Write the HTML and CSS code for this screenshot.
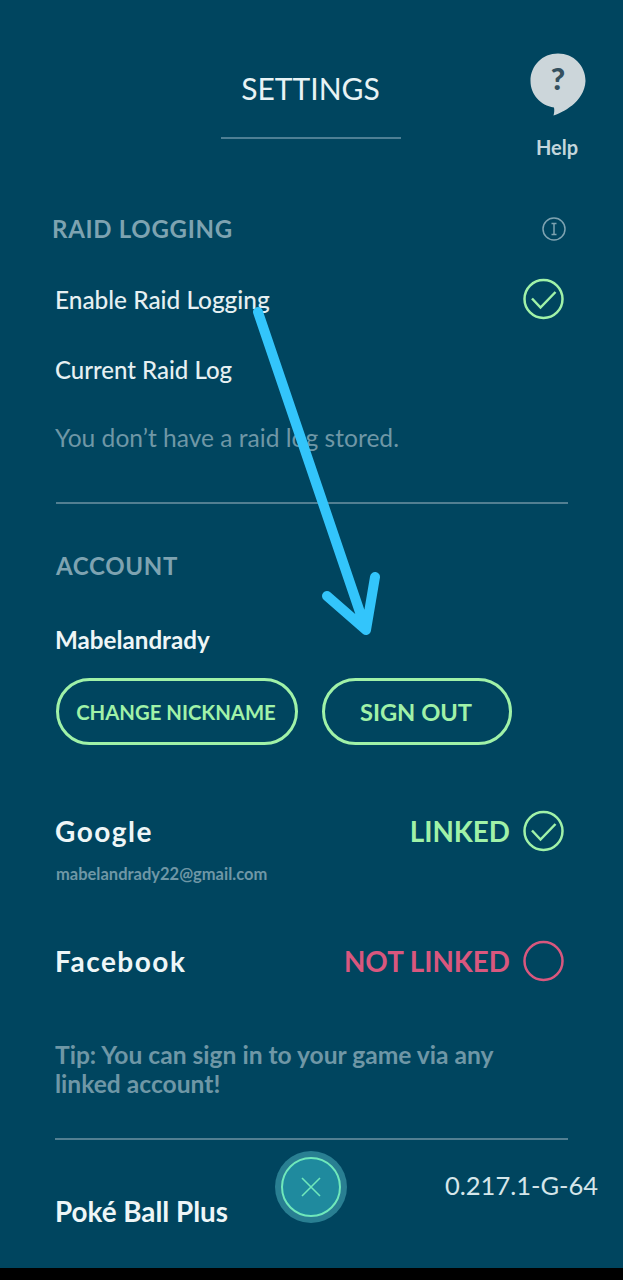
FILE: index.html
```html
<!DOCTYPE html>
<html lang="en">
<head>
    <meta charset="UTF-8">
    <meta name="viewport" content="width=device-width, initial-scale=1.0">
    <title>Settings</title>
    <link rel="stylesheet" href="styles.css">
</head>
<body>
    <div class="screen">
        <div class="header">
            <div class="title-wrap">
                <h1 class="title">SETTINGS</h1>
            </div>
            <div class="help">
                <svg class="help-icon" width="56" height="64" viewBox="0 0 56 64">
                    <path d="M28 0.500C12.500 0.500 0.500 12.500 0.500 28c0 13.500 10 24.500 23.500 26.500 0.500 2.500 0.300 5.500-0.500 8 8-2.500 31-13 32-34.500C55.500 12.500 43.500 0.500 28 0.500z" fill="#ccd6da"/>
                    <text x="28" y="37" class="help-mark">?</text>
                </svg>
                <span class="help-label">Help</span>
            </div>
        </div>

        <div class="section raid">
            <div class="row section-head">
                <h2 class="section-title">RAID LOGGING</h2>
                <svg class="info-icon" width="24" height="24" viewBox="0 0 24 24">
                    <circle cx="12" cy="12" r="11" fill="none" stroke="#7ea3b1" stroke-width="1.500"/>
                    <path d="M9.500 6.500h5M9.500 17.500h5M12 6.500v11" fill="none" stroke="#7ea3b1" stroke-width="1.500"/>
                </svg>
            </div>
            <div class="row enable-row">
                <span class="item-label">Enable Raid Logging</span>
                <svg class="check-icon" width="42" height="42" viewBox="0 0 42 42">
                    <circle cx="20.500" cy="21" r="19" fill="none" stroke="#a0f2a8" stroke-width="2.500"/>
                    <path d="M9 20.500L17.500 29.500L32.500 14" fill="none" stroke="#a0f2a8" stroke-width="2.500"/>
                </svg>
            </div>
            <div class="item-label current-log">Current Raid Log</div>
            <div class="muted-text no-log">You don’t have a raid log stored.</div>
        </div>

        <div class="section account">
            <h2 class="section-title">ACCOUNT</h2>
            <div class="nickname">Mabelandrady</div>
            <div class="btn-row">
                <button class="btn btn-nickname">CHANGE NICKNAME</button>
                <button class="btn btn-signout">SIGN OUT</button>
            </div>

            <div class="row link-row google-row">
                <span class="provider">Google</span>
                <span class="link-status linked">LINKED</span>
                <svg class="check-icon" width="42" height="42" viewBox="0 0 42 42">
                    <circle cx="20.500" cy="21" r="19" fill="none" stroke="#a0f2a8" stroke-width="2.500"/>
                    <path d="M9 20.500L17.500 29.500L32.500 14" fill="none" stroke="#a0f2a8" stroke-width="2.500"/>
                </svg>
            </div>
            <div class="email">mabelandrady22@gmail.com</div>

            <div class="row link-row facebook-row">
                <span class="provider">Facebook</span>
                <span class="link-status not-linked">NOT LINKED</span>
                <svg class="check-icon" width="42" height="42" viewBox="0 0 42 42">
                    <circle cx="20.500" cy="21" r="19" fill="none" stroke="#d9577e" stroke-width="2.500"/>
                </svg>
            </div>
            <div class="muted-text tip">Tip: You can sign in to your game via any<br>linked account!</div>
        </div>

        <div class="section ball">
            <div class="ball-label">Poké Ball Plus</div>
        </div>

        <div class="version">0.217.1-G-64</div>
        <button class="close-btn">
            <svg width="62" height="62" viewBox="0 0 62 62">
                <circle cx="31" cy="31" r="29" fill="#1f8a9e" stroke="#6fe8bb" stroke-width="2"/>
                <path d="M22 22l18 18M40 22L22 40" fill="none" stroke="#6fe8bb" stroke-width="1.600"/>
            </svg>
        </button>

        <svg class="arrow" width="623" height="1268" viewBox="0 0 623 1268">
            <path d="M258 312L366 630M327 596L366 630L375 577" fill="none" stroke="#33c5fb" stroke-width="10" stroke-linecap="round" stroke-linejoin="round"/>
        </svg>
    </div>
</body>
</html>
```

FILE: styles.css
```css
* {
    margin: 0;
    padding: 0;
    box-sizing: border-box;
    font-family: 'Lato', sans-serif;
}

body {
    background: #000;
    height: 1280px;
    overflow: hidden;
}

.screen {
    position: relative;
    height: 1268px;
    background: #00455f;
    overflow: hidden;
}

.header {
    display: flex;
    justify-content: center;
    height: 198px;
    padding-top: 53px;
}

.title-wrap {
    width: 180px;
    height: 86px;
    margin-left: -2px;
    border-bottom: 2px solid #4e7f94;
    text-align: center;
}

.title {
    font-size: 30px;
    font-weight: 400;
    line-height: 70px;
    color: #e8f3f5;
}

.help {
    position: absolute;
    top: 53px;
    left: 529px;
    width: 56px;
    display: flex;
    flex-direction: column;
    align-items: center;
}

.help-icon {
    margin-left: 2px;
}

.help-mark {
    font-size: 31px;
    font-weight: 900;
    text-anchor: middle;
    fill: #34505e;
}

.help-label {
    margin-top: 18px;
    font-size: 20px;
    font-weight: 700;
    color: #c3d6dc;
}

.section {
    margin: 0 55px 0 56px;
}

.row {
    display: flex;
    align-items: center;
}

.raid {
    height: 306px;
    border-bottom: 2px solid #527f92;
}

.section-head {
    justify-content: space-between;
    height: 61px;
    padding-right: 2px;
    margin-left: -4px;
}

.section-title {
    font-size: 24px;
    font-weight: 700;
    letter-spacing: 0.700px;
    color: #7ea3b1;
}

.enable-row {
    justify-content: space-between;
    height: 80px;
    padding-right: 3px;
}

.item-label {
    margin-left: -1px;
    font-size: 24.400px;
    font-weight: 500;
    color: #e6f0f2;
}

.current-log {
    margin-top: 16px;
    font-size: 24px;
    line-height: 30px;
}

.muted-text {
    font-size: 24.600px;
    color: #6f97a6;
}

.no-log {
    margin-top: 38px;
    margin-left: -1px;
    line-height: 30px;
}

.account .section-title {
    margin-top: 47px;
    line-height: 30px;
}

.nickname {
    margin-top: 44px;
    margin-left: -1px;
    font-size: 24.200px;
    font-weight: 700;
    line-height: 30px;
    color: #eef6f7;
}

.btn-row {
    display: flex;
    gap: 24px;
    margin-top: 23px;
}

.btn {
    height: 67px;
    border: 3px solid #a0f2a8;
    border-radius: 34px;
    background: transparent;
    font-weight: 700;
    color: #a0f2a8;
}

.btn-nickname {
    width: 242px;
    padding-right: 2px;
    font-size: 20.300px;
}

.btn-signout {
    width: 190px;
    padding-right: 2px;
    font-size: 23.700px;
}

.link-row {
    height: 42px;
    padding-right: 3px;
}

.google-row {
    margin-top: 65px;
}

.provider {
    flex: 1;
    margin-left: -1px;
    font-size: 28px;
    font-weight: 700;
    letter-spacing: 1.500px;
    color: #eef6f7;
}

.link-status {
    margin-right: 13px;
    font-size: 27.800px;
    font-weight: 700;
}

.linked {
    color: #a0f2a8;
}

.not-linked {
    color: #d9577e;
}

.email {
    margin-top: 12px;
    font-size: 16.500px;
    font-weight: 700;
    line-height: 20px;
    color: #6f97a6;
}

.facebook-row {
    margin-top: 56px;
}

.tip {
    margin-top: 58px;
    margin-left: -1px;
    height: 100px;
    font-weight: 700;
    line-height: 29px;
    border-bottom: 2px solid #527f92;
}

.ball-label {
    margin-top: 56px;
    margin-left: -1px;
    font-size: 27.800px;
    font-weight: 700;
    line-height: 32px;
    color: #eef6f7;
}

.version {
    position: absolute;
    top: 1169px;
    left: 445px;
    font-size: 25.500px;
    line-height: 32px;
    color: #d5e6ea;
}

.close-btn {
    position: absolute;
    top: 1151px;
    left: 275px;
    width: 72px;
    height: 72px;
    border: none;
    border-radius: 50%;
    background: #297f92;
    display: flex;
    align-items: center;
    justify-content: center;
}

.arrow {
    position: absolute;
    top: 0;
    left: 0;
}
```
